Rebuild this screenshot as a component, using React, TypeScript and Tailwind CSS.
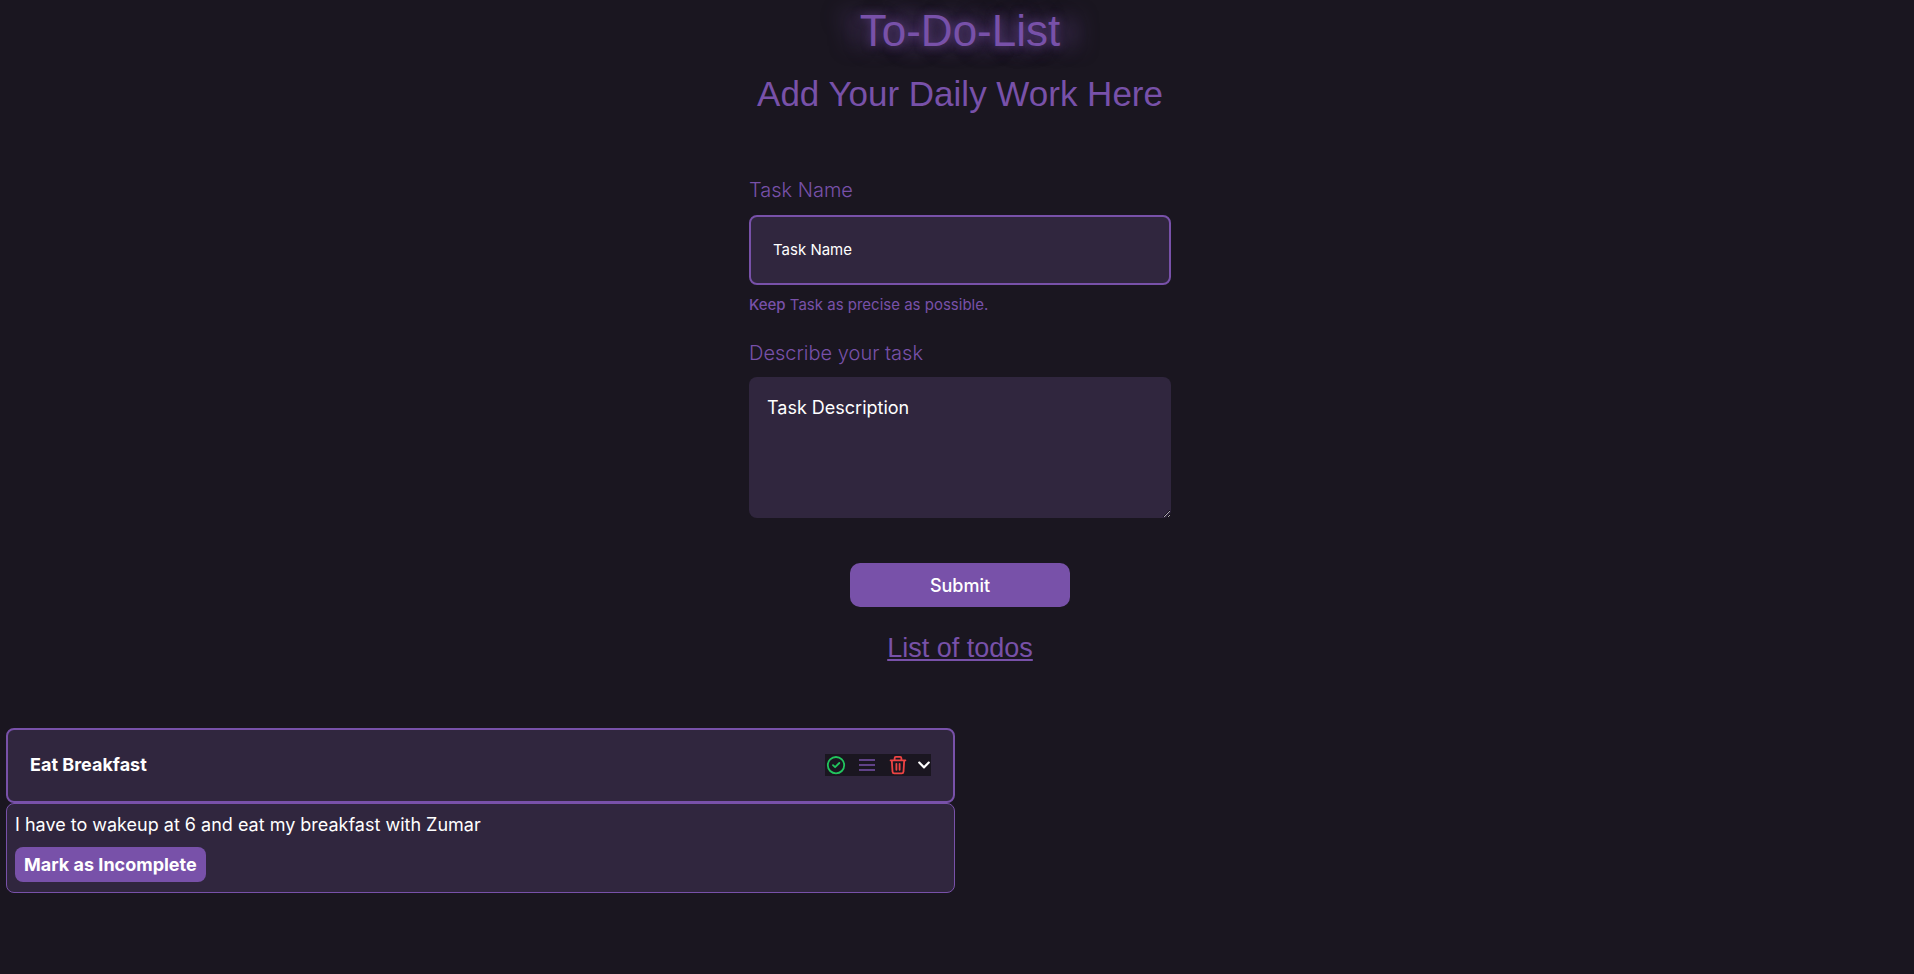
import { useState } from "react";
import { FaChevronDown } from "react-icons/fa";

interface Todo {
  id: number;
  title: string;
  description: string;
}

const todos: Todo[] = [
  {
    id: 1,
    title: "Eat Breakfast",
    description: "I have to wakeup at 6 and eat my breakfast with Zumar",
  },
];

const heading = "font-['Liberation_Sans',Arial,sans-serif] text-[#7851a9]";

function CheckIcon() {
  return (
    <svg width="22" height="22" viewBox="0 0 22 22" fill="none" stroke="currentColor" strokeWidth="1.8" strokeLinecap="round" strokeLinejoin="round" aria-hidden="true">
      <circle cx="11" cy="11.2" r="8.2" />
      <path d="M8 11.2l2.1 2 4.2-4.2" />
    </svg>
  );
}

function MenuIcon() {
  return (
    <svg width="24" height="22" viewBox="0 0 24 22" fill="none" stroke="currentColor" strokeWidth="1.7" aria-hidden="true">
      <path d="M4 6h16M4 11h16M4 16h16" />
    </svg>
  );
}

function TrashIcon() {
  return (
    <svg width="22" height="22" viewBox="0 0 22 22" fill="none" stroke="currentColor" strokeWidth="1.8" strokeLinecap="round" strokeLinejoin="round" aria-hidden="true">
      <path d="M3.6 6.4h14.8M7.6 6.2V4.2c0-.8.5-1.3 1.3-1.3h4.2c.8 0 1.3.5 1.3 1.3v2M4.8 6.4l.7 11.2c.1 1 .8 1.7 1.8 1.7h7.4c1 0 1.7-.7 1.8-1.7l.7-11.2M9.4 9.8v6M12.6 9.8v6" />
    </svg>
  );
}

function TaskForm() {
  return (
    <form className="mt-[59px] flex w-[422px] max-w-full flex-col" onSubmit={(e) => e.preventDefault()}>
      <label htmlFor="task-name" className="text-[20px] leading-[26px] font-light text-[#7851a9]">
        Task Name
      </label>
      <input
        id="task-name"
        type="text"
        placeholder="Task Name"
        className="mt-3 h-[70px] rounded-lg border-2 border-[#7851a9] bg-[#30263e] px-[22px] pb-[2px] text-[15px] text-white outline-none placeholder:text-white placeholder:opacity-100"
      />
      <p className="mt-2 text-[15px] leading-6 font-normal text-[#7851a9]">
        <span className="font-medium">Keep</span> Task as precise as possible.
      </p>
      <label htmlFor="task-description" className="mt-[22px] text-[20px] leading-7 font-light text-[#7851a9]">
        Describe your task
      </label>
      <textarea
        id="task-description"
        placeholder="Task Description"
        className="mt-[10px] h-[141px] resize rounded-lg bg-[#30263e] px-[18px] py-[18px] text-[18px] leading-[26px] text-white outline-none placeholder:text-white placeholder:opacity-100"
      />
      <button
        type="submit"
        className="mt-[45px] h-11 w-[220px] self-center rounded-[10px] bg-[#7851a9] text-[18px] font-medium text-white"
      >
        Submit
      </button>
    </form>
  );
}

function TodoCard({ todo }: { todo: Todo }) {
  const [open, setOpen] = useState(true);
  const [complete, setComplete] = useState(true);

  return (
    <li>
      <div className="flex h-[75px] items-center justify-between rounded-lg border-2 border-[#7851a9] bg-[#30263e] px-[22px] pb-[2px]">
        <h3 className="text-[18px] font-bold text-white">{todo.title}</h3>
        <div className="flex h-[22px] items-center bg-[#1a1620]">
          <button type="button" aria-label="Complete" className="text-[#22c55e]">
            <CheckIcon />
          </button>
          <button type="button" aria-label="Reorder" className="ml-2 text-[#7851a9]">
            <MenuIcon />
          </button>
          <button type="button" aria-label="Delete" className="ml-2 text-[#ef4444]">
            <TrashIcon />
          </button>
          <button type="button" aria-label="Toggle details" className="ml-2 text-white" onClick={() => setOpen(!open)}>
            <FaChevronDown size={14} />
          </button>
        </div>
      </div>
      {open && (
        <div className="flex flex-col items-start gap-2 rounded-lg border border-[#7851a9] bg-[#30263e] px-2 pt-[7px] pb-[10px]">
          <p className="text-[18px] leading-7 text-white">{todo.description}</p>
          <button
            type="button"
            className="h-[35px] rounded-lg bg-[#7851a9] px-[9px] text-[18px] font-bold text-white"
            onClick={() => setComplete(!complete)}
          >
            {complete ? "Mark as Incomplete" : "Mark as Complete"}
          </button>
        </div>
      )}
    </li>
  );
}

export default function App() {
  return (
    <main className="flex min-h-screen flex-col items-center bg-[#1a1620] pl-[6px] font-[Inter,sans-serif]">
      <h1 className={`${heading} mt-1 text-[44px] leading-[54px] [text-shadow:0_0_10px_#7851a9a0,-20px_0_20px_#7851a990,20px_0_20px_#7851a990]`}>
        To-Do-List
      </h1>
      <h2 className={`${heading} mt-3 text-[35px] leading-12`}>Add Your Daily Work Here</h2>
      <TaskForm />
      <h2 className={`${heading} mt-[23px] text-[27px] leading-9 underline`}>List of todos</h2>
      <ul className="mt-[62px] grid w-full grid-cols-2 gap-[10px]">
        {todos.map((todo) => (
          <TodoCard key={todo.id} todo={todo} />
        ))}
      </ul>
    </main>
  );
}
